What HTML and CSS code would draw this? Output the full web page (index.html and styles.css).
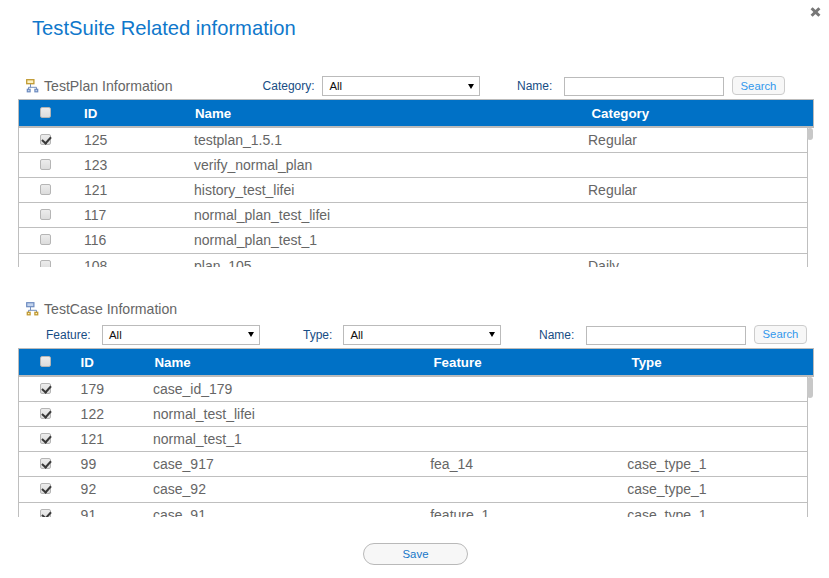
FILE: index.html
```html
<!DOCTYPE html>
<html lang="en">
<head>
<meta charset="utf-8">
<title>TestSuite Related information</title>
<link rel="stylesheet" href="styles.css">
</head>
<body>
<main class="dialog">
  <header class="dialog-head">
    <h1>TestSuite Related information</h1>
    <button class="close" aria-label="Close"><svg width="11" height="10" viewBox="0 0 11 10"><path d="M1.6 1.2L9.4 8.8M9.4 1.2L1.6 8.8"/></svg></button>
  </header>

  <section class="plan">
    <div class="bar">
      <svg class="tree" width="13" height="14" viewBox="0 0 13 14"><path class="line" d="M4.5 5v3.3M2.5 10V8.3h8V10"/><rect class="gold" x=".7" y=".7" width="7.2" height="4"/><rect class="blue" x="1.3" y="10.3" width="2.8" height="2.5"/><rect class="blue" x="8.9" y="10.3" width="2.8" height="2.5"/></svg>
      <h2>TestPlan Information</h2>
      <span class="label category">Category:</span>
      <div class="select"><span>All</span><i class="arrow"></i></div>
      <span class="label plan-name">Name:</span>
      <input class="field" type="text" aria-label="Name">
      <button class="search">Search</button>
    </div>
    <div class="row thead"><i class="box"></i><b>ID</b><b>Name</b><b>Category</b></div>
    <div class="scroll">
      <div class="rows">
        <div class="row"><i class="box on"></i><span>125</span><span>testplan_1.5.1</span><span>Regular</span></div>
        <div class="row"><i class="box"></i><span>123</span><span>verify_normal_plan</span><span></span></div>
        <div class="row"><i class="box"></i><span>121</span><span>history_test_lifei</span><span>Regular</span></div>
        <div class="row"><i class="box"></i><span>117</span><span>normal_plan_test_lifei</span><span></span></div>
        <div class="row"><i class="box"></i><span>116</span><span>normal_plan_test_1</span><span></span></div>
        <div class="row"><i class="box"></i><span>108</span><span>plan_105</span><span>Daily</span></div>
      </div>
      <i class="thumb"></i>
    </div>
  </section>

  <section class="case">
    <div class="bar title-bar">
      <svg class="tree" width="13" height="14" viewBox="0 0 13 14"><path class="line" d="M4.5 5v3.3M2.5 10V8.3h8V10"/><rect class="blue" x=".7" y=".7" width="7.2" height="4"/><rect class="gold" x="1.3" y="10.3" width="2.8" height="2.5"/><rect class="gold" x="8.9" y="10.3" width="2.8" height="2.5"/></svg>
      <h2>TestCase Information</h2>
    </div>
    <div class="bar filters">
      <span class="label feature">Feature:</span>
      <div class="select"><span>All</span><i class="arrow"></i></div>
      <span class="label type">Type:</span>
      <div class="select"><span>All</span><i class="arrow"></i></div>
      <span class="label case-name">Name:</span>
      <input class="field" type="text" aria-label="Name">
      <button class="search">Search</button>
    </div>
    <div class="row thead"><i class="box"></i><b>ID</b><b>Name</b><b>Feature</b><b>Type</b></div>
    <div class="scroll">
      <div class="rows">
        <div class="row"><i class="box on"></i><span>179</span><span>case_id_179</span><span></span><span></span></div>
        <div class="row"><i class="box on"></i><span>122</span><span>normal_test_lifei</span><span></span><span></span></div>
        <div class="row"><i class="box on"></i><span>121</span><span>normal_test_1</span><span></span><span></span></div>
        <div class="row"><i class="box on"></i><span>99</span><span>case_917</span><span>fea_14</span><span>case_type_1</span></div>
        <div class="row"><i class="box on"></i><span>92</span><span>case_92</span><span></span><span>case_type_1</span></div>
        <div class="row"><i class="box on"></i><span>91</span><span>case_91</span><span>feature_1</span><span>case_type_1</span></div>
      </div>
      <i class="thumb"></i>
    </div>
  </section>

  <footer><button class="save">Save</button></footer>
</main>
</body>
</html>
```

FILE: styles.css
```css
* { box-sizing: border-box; }
body {
  margin: 0;
  background: #fff;
  color: #666;
  font-family: "Liberation Sans", Arial, sans-serif;
  overflow: hidden;
}
button { font-family: inherit; padding: 0; }
.dialog { width: 829px; height: 578px; padding: 0 15px 0 18px; }
.dialog-head { display: flex; justify-content: space-between; height: 73px; }
h1 {
  margin: 16px 0 0 14px;
  color: #0f78cb;
  font-size: 20.2px;
  font-weight: normal;
  line-height: 24px;
}
.close { width: 11px; height: 10px; margin: 7px -7px 0 0; border: 0; background: none; }
.close svg { display: block; }
.close path { stroke: #777; stroke-width: 3; fill: none; }

.bar { display: flex; align-items: center; height: 26px; white-space: nowrap; }
.tree { flex: none; margin-left: 8px; }
.tree .line { fill: none; stroke: #7590bd; stroke-width: 1; }
.tree .gold { fill: #fdf2c4; stroke: #c19a32; stroke-width: 1.3; }
.tree .blue { fill: #c3d4ee; stroke: #6d8bbf; stroke-width: 1.2; }
h2 { margin: 0 0 0 5px; font-size: 14.1px; font-weight: normal; line-height: 20px; width: 132px; }
.label { flex: none; color: #174d84; font-size: 12px; line-height: 16px; }
.category { margin-left: 86.6px; width: 59.8px; }
.plan-name { margin-left: 36.6px; width: 47px; }
.feature { margin-left: 28px; width: 56px; }
.type { margin-left: 43px; width: 40.4px; }
.case-name { margin-left: 37.6px; width: 47px; }
.select {
  flex: none;
  display: flex;
  align-items: center;
  justify-content: space-between;
  width: 158px;
  height: 20px;
  padding: 0 5px 0 6px;
  border: 1px solid #bbb;
  color: #111;
  font-size: 11.4px;
}
.arrow { border: 3px solid transparent; border-top: 5px solid #000; border-bottom: 0; }
.field { flex: none; width: 160px; height: 19px; padding: 0 4px; border: 1px solid #bbb; background: #fff; }
.search {
  flex: none;
  width: 53px;
  height: 19px;
  margin: -1px 0 0 8px;
  border: 1px solid #ccc;
  border-radius: 4px;
  background: #f7f7f7;
  color: #3298ec;
  font-size: 11.3px;
}
.filters .field { margin-top: 1px; }

.row {
  display: grid;
  align-items: center;
  height: 25.2px;
  border-bottom: 1px solid #bfbfbf;
  font-size: 14px;
  white-space: nowrap;
}
.plan .row { grid-template-columns: 65px 110px 394px 1fr; }
.case .row { grid-template-columns: 61.6px 72.4px 277.2px 197px 1fr; }
.thead {
  width: 796px;
  height: 28.6px;
  padding-top: 1px;
  border: 1px solid #bbb;
  border-bottom-width: 2px;
  background: #0071c6;
  color: #fff;
  font-size: 13.3px;
}
.plan .thead { grid-template-columns: 65px 111px 396.5px 1fr; }
.case .thead { grid-template-columns: 61.5px 74px 279px 198px 1fr; }
.scroll { display: flex; height: 139.4px; overflow: hidden; }
.case .scroll { height: 140.4px; }
.rows { width: 790px; height: 151.2px; border: 1px solid #bfbfbf; border-width: 0 1px; }
.thumb { width: 6px; height: 12px; margin-left: -1px; border-radius: 3px; background: #c8c8c8; }
.case .thumb { height: 21px; }
.box {
  width: 11px;
  height: 11px;
  margin: -1px 0 0 21px;
  border: 1px solid #b5b5b5;
  border-radius: 2px;
  background: linear-gradient(#ececec, #dcdcdc);
}
.thead .box { margin-top: -2px; }
.on::after {
  content: "";
  display: block;
  width: 4px;
  height: 7px;
  margin: 0 0 0 3px;
  border: solid #383838;
  border-width: 0 2px 2px 0;
  transform: translate(-.5px, -.2px) rotate(42deg);
}
.case { padding-top: 29px; }
.filters { height: 26px; }
footer { display: flex; justify-content: center; padding-top: 26px; }
.save {
  width: 105px;
  height: 22px;
  margin-right: 1px;
  border: 1px solid #b9b9b9;
  border-radius: 11px;
  background: #f7f7f7;
  color: #1676c8;
  font-size: 11.4px;
}
```
